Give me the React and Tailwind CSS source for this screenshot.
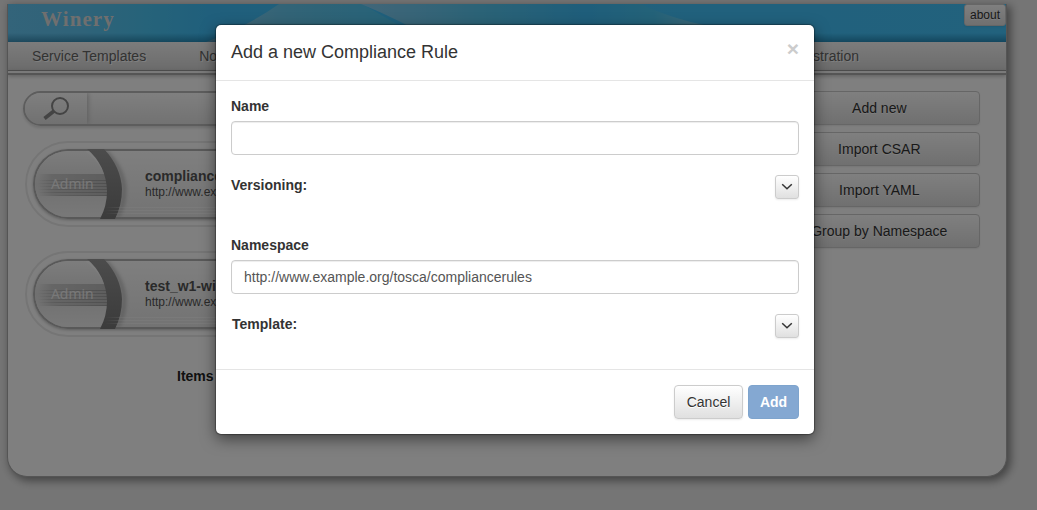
import React from "react";

const btn =
  "border border-[#ccc] bg-gradient-to-b from-white to-[#e0e0e0] text-[#333] shadow-[0_1px_2px_rgba(0,0,0,0.08)] [text-shadow:0_1px_0_#fff]";

function HeaderArt() {
  return (
    <svg className="absolute inset-0 h-full w-full" viewBox="0 0 998 38" preserveAspectRatio="none">
      <defs>
        <linearGradient id="base" x1="0" x2="1" y1="0" y2="0">
          <stop offset="0" stopColor="#66c8f4" />
          <stop offset="0.07" stopColor="#60c6f2" />
          <stop offset="0.14" stopColor="#4cc6f4" />
          <stop offset="0.2" stopColor="#40bff8" />
          <stop offset="1" stopColor="#44c4fb" />
        </linearGradient>
        <linearGradient id="rayA" x1="0" x2="1" y1="0" y2="0">
          <stop offset="0" stopColor="#8ed2f4" />
          <stop offset="0.35" stopColor="#66c8ee" />
          <stop offset="1" stopColor="#46c6f2" />
        </linearGradient>
        <linearGradient id="rayB" x1="0" x2="1" y1="0" y2="0">
          <stop offset="0" stopColor="#84cdf2" />
          <stop offset="0.3" stopColor="#56c6ee" />
          <stop offset="0.55" stopColor="#3ebcf6" />
          <stop offset="0.72" stopColor="#48c5f2" />
          <stop offset="0.9" stopColor="#98d8f2" />
          <stop offset="1" stopColor="#98d8f2" />
        </linearGradient>
        <linearGradient id="foot" x1="0" x2="0" y1="0" y2="1">
          <stop offset="0" stopColor="#004466" stopOpacity="0" />
          <stop offset="1" stopColor="#004466" stopOpacity="0.42" />
        </linearGradient>
      </defs>
      <rect width="998" height="38" fill="url(#base)" />
      <path d="M198 38Q240 22 271 0H354L420 38Z" fill="url(#rayA)" />
      <path d="M353 0H632Q665 15 700 22L760 38H430Q390 15 353 0Z" fill="url(#rayB)" />
      <rect y="29" width="998" height="9" fill="url(#foot)" />
    </svg>
  );
}

function RuleItem({ name }) {
  return (
    <div className="relative h-[86px] w-[750px] rounded-full border-2 border-[#ebebeb] p-[6px]">
      <div className="relative h-[70px] overflow-hidden rounded-full bg-gradient-to-b from-white to-[#e6e6e6] shadow-[inset_0_0_0_2px_#b2b2b2,0_1px_3px_#bbb]">
        <svg className="absolute left-0 top-0" width="260" height="70" viewBox="0 0 260 70">
          <defs>
            <linearGradient id="seal" x1="0" x2="0" y1="0" y2="1">
              <stop offset="0" stopColor="#fafafa" />
              <stop offset="0.5" stopColor="#e0e0e0" />
              <stop offset="1" stopColor="#f2f2f2" />
            </linearGradient>
            <linearGradient id="band" x1="0" x2="0" y1="0" y2="1">
              <stop offset="0" stopColor="#989898" />
              <stop offset="1" stopColor="#767676" />
            </linearGradient>
            <linearGradient id="ribbon" x1="0" x2="1" y1="0" y2="0">
              <stop offset="0" stopColor="#cccccc" stopOpacity="0" />
              <stop offset="0.2" stopColor="#cccccc" />
              <stop offset="1" stopColor="#bcbcbc" />
            </linearGradient>
            <linearGradient id="line" x1="0" x2="1" y1="0" y2="0">
              <stop offset="0" stopColor="#a8a8a8" stopOpacity="0" />
              <stop offset="0.3" stopColor="#a8a8a8" stopOpacity="0.7" />
              <stop offset="1" stopColor="#a0a0a0" />
            </linearGradient>
            <linearGradient id="glint" x1="0" x2="1" y1="0" y2="0">
              <stop offset="0" stopColor="#ffffff" stopOpacity="0" />
              <stop offset="0.15" stopColor="#ffffff" stopOpacity="0.45" />
              <stop offset="1" stopColor="#ffffff" stopOpacity="0.5" />
            </linearGradient>
            <filter id="soft" x="-30%" width="160%">
              <feGaussianBlur stdDeviation="2" />
            </filter>
          </defs>
          <path d="M35 2H52Q72 17 74 36Q76 54 67 68H35A33 33 0 0 1 35 2Z" fill="url(#seal)" />
          <rect x="5" y="25" width="70" height="21" fill="url(#ribbon)" />
          {[31, 34, 37, 40, 43, 46].map((y) => (
            <rect key={y} x="5" y={y} width="70" height="1" fill="url(#line)" />
          ))}
          <path d="M72 2Q90 20 91 40Q91 58 84 68" fill="none" stroke="#aaa" strokeWidth="3" filter="url(#soft)" />
          <path d="M54 0H71Q88 18 89 40Q89 56 82 70H67Q74 57 74 42Q73 16 54 0Z" fill="url(#band)" />
          {[58, 61, 64].map((y) => (
            <rect key={y} x="72" y={y} width="188" height="1" fill="url(#glint)" />
          ))}
        </svg>
        <span className="absolute left-[18px] top-[25px] font-['Open_Sans',sans-serif] text-[14px] leading-[20px] text-[#f2f2f2]">Admin</span>
        <div className="pl-[112px] pt-[18px]">
          <div className="text-[14px] font-bold leading-[18px] text-[#555]">{name}</div>
          <div className="text-[12px] leading-[14px] text-[#555]">http://www.example.org/tosca/compliancerules</div>
        </div>
      </div>
    </div>
  );
}

function Chevron() {
  return (
    <button className={`${btn} flex h-6 w-6 items-center justify-center rounded-[3px]`}>
      <svg width="12" height="8" viewBox="0 0 12 8" fill="none" stroke="#333" strokeWidth="1.5">
        <path d="M1.2 1.2L6 5.8L10.8 1.2" />
      </svg>
    </button>
  );
}

export default function App() {
  return (
    <div className="relative h-[510px] w-[1037px] overflow-hidden bg-[#ebebeb] pl-[7px] pt-[4px] font-['Liberation_Sans',Arial,sans-serif] text-[14px] leading-5">
      <div className="h-[473px] w-[1000px] overflow-hidden rounded-b-[20px] border border-t-0 border-[#aaa] bg-white shadow-[3px_3px_8px_1px_#888]">
        <header className="relative h-[38px]">
          <HeaderArt />
          <h1 className="relative pl-[33px] pt-[2px] font-['Liberation_Serif',serif] text-[21px] font-bold leading-[26px] tracking-[1.1px] text-[#dedede]">Winery</h1>
          <button className={`${btn} absolute right-0 top-0 h-[22px] w-[42px] rounded-[3px] text-[12px]`}>about</button>
        </header>
        <nav className="flex h-[28px] items-center justify-between bg-gradient-to-b from-[#f8f8f8] to-[#d8d8d8] pl-[24px] pr-[147px] text-[#666] [text-shadow:1px_1px_0_#fff]">
          <span>Service Templates</span>
          <span className="mr-auto pl-[53px]">Node Types</span>
          <span>Administration</span>
        </nav>
        <div className="h-[5px] border-b-2 border-t border-b-[#aaa] border-t-[#999] bg-[#f4f4f4] shadow-[0_1px_4px_#bbb]" />
        <main className="flex justify-between pl-[15px] pr-[26px] pt-[16px]">
          <div className="flex w-[760px] flex-col">
            <div className="flex h-[35px] w-[750px] overflow-hidden rounded-full border-2 border-[#bbb] bg-gradient-to-b from-white to-[#e4e4e4] shadow-[0_2px_3px_#ddd]">
              <div className="flex w-[62px] items-center justify-center bg-gradient-to-b from-white to-[#e2e2e2] shadow-[1px_0_5px_#bbb]">
                <svg width="28" height="25" viewBox="0 0 28 25" fill="none" stroke="#888">
                  <circle cx="18" cy="10" r="8" strokeWidth="2" />
                  <path d="M12 15L2.5 22.5" strokeWidth="3.6" />
                </svg>
              </div>
            </div>
            <div className="ml-[2px] mt-[15px]"><RuleItem name="compliancerule_w1-wip1" /></div>
            <div className="ml-[2px] mt-[24px]"><RuleItem name="test_w1-wip1" /></div>
            <div className="ml-[154px] mt-[29px] font-bold text-[#222]">Items per page</div>
          </div>
          <div className="flex w-[200px] flex-col gap-[7px]">
            {["Add new", "Import CSAR", "Import YAML", "Group by Namespace"].map((label) => (
              <button key={label} className={`${btn} h-[34px] rounded-[4px] pr-[2px]`}>{label}</button>
            ))}
          </div>
        </main>
      </div>
      <div className="absolute inset-0 flex items-start bg-black/50 pl-[216px] pt-[25px]">
        <section className="h-[409px] w-[598px] rounded-[5px] bg-white text-[#333] shadow-[0_5px_15px_rgba(0,0,0,0.5),0_0_1px_1px_rgba(0,0,0,0.3)]">
          <div className="flex h-[56px] justify-between border-b border-[#e5e5e5] px-[15px] pt-[14px]">
            <h2 className="text-[18px] leading-[26px]">Add a new Compliance Rule</h2>
            <span className="h-5 text-[21px] font-bold leading-[19px] text-[#ccc]">×</span>
          </div>
          <div className="flex h-[288px] flex-col px-[15px] pt-[15px]">
            <label className="font-bold">Name</label>
            <div className="mt-[5px] h-[34px] shrink-0 rounded-[4px] border border-[#ccc] shadow-[inset_0_1px_1px_rgba(0,0,0,0.075)]" />
            <div className="mt-5 flex h-6 justify-between">
              <span className="font-bold">Versioning:</span>
              <Chevron />
            </div>
            <label className="mt-[36px] font-bold">Namespace</label>
            <div className="mt-[5px] h-[34px] shrink-0 rounded-[4px] border border-[#ccc] px-3 py-[6px] text-[#555] shadow-[inset_0_1px_1px_rgba(0,0,0,0.075)]">http://www.example.org/tosca/compliancerules</div>
            <div className="mt-5 flex h-6 justify-between">
              <span className="pl-px font-bold">Template:</span>
              <Chevron />
            </div>
          </div>
          <div className="flex h-[65px] justify-end gap-[5px] border-t border-[#e5e5e5] pr-[15px] pt-[15px]">
            <button className={`${btn} h-[34px] w-[69px] rounded-[4px]`}>Cancel</button>
            <button className="h-[34px] w-[51px] rounded-[4px] border border-[#7ea4cd] bg-[#84a8d2] font-bold text-white">Add</button>
          </div>
        </section>
      </div>
    </div>
  );
}
